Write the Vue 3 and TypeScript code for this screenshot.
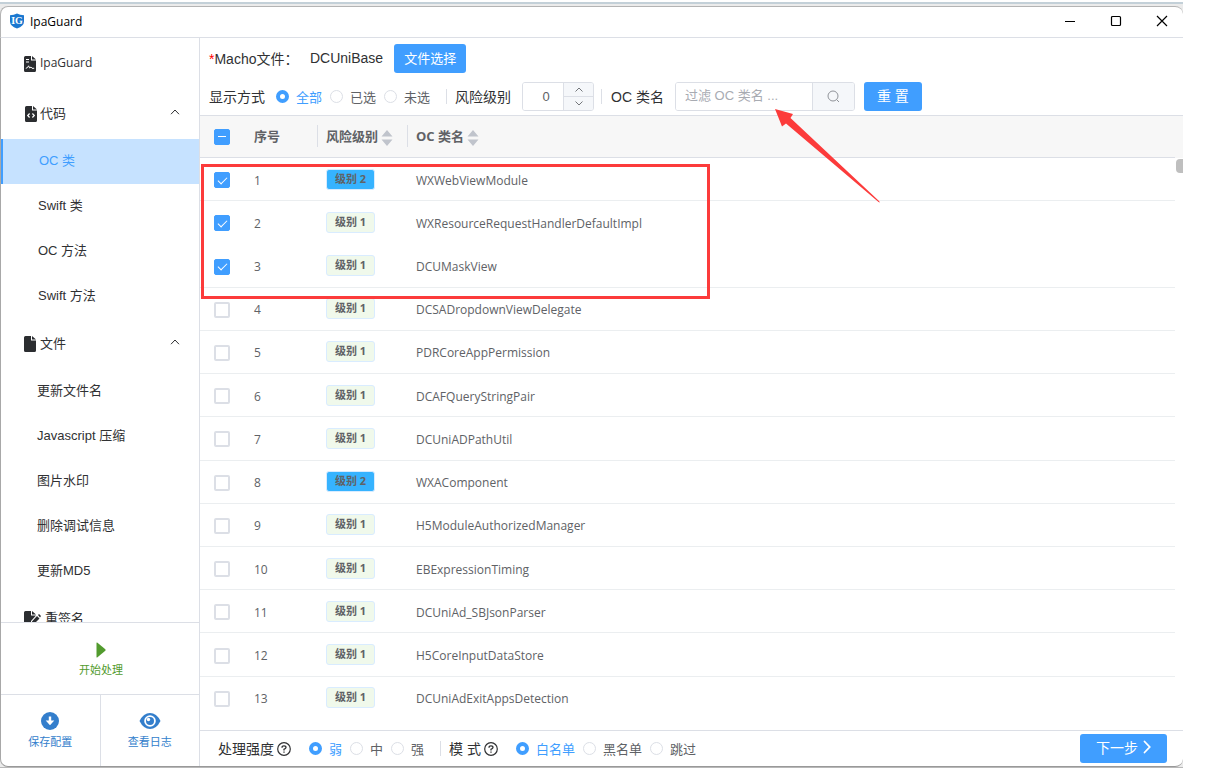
<script setup lang="ts">
import { ref } from 'vue'

interface Row {
  id: number
  level: number
  name: string
  checked: boolean
  joined?: boolean
}

interface Item {
  label: string
  active?: boolean
}

const rows = ref<Row[]>([
  { id: 1, level: 2, name: 'WXWebViewModule', checked: true },
  { id: 2, level: 1, name: 'WXResourceRequestHandlerDefaultImpl', checked: true, joined: true },
  { id: 3, level: 1, name: 'DCUMaskView', checked: true },
  { id: 4, level: 1, name: 'DCSADropdownViewDelegate', checked: false },
  { id: 5, level: 1, name: 'PDRCoreAppPermission', checked: false },
  { id: 6, level: 1, name: 'DCAFQueryStringPair', checked: false },
  { id: 7, level: 1, name: 'DCUniADPathUtil', checked: false },
  { id: 8, level: 2, name: 'WXAComponent', checked: false },
  { id: 9, level: 1, name: 'H5ModuleAuthorizedManager', checked: false },
  { id: 10, level: 1, name: 'EBExpressionTiming', checked: false },
  { id: 11, level: 1, name: 'DCUniAd_SBJsonParser', checked: false },
  { id: 12, level: 1, name: 'H5CoreInputDataStore', checked: false },
  { id: 13, level: 1, name: 'DCUniAdExitAppsDetection', checked: false, joined: true },
])

const codeItems: Item[] = [
  { label: 'OC 类', active: true },
  { label: 'Swift 类' },
  { label: 'OC 方法' },
  { label: 'Swift 方法' },
]
const fileItems: Item[] = [
  { label: '更新文件名' },
  { label: 'Javascript 压缩' },
  { label: '图片水印' },
  { label: '删除调试信息' },
  { label: '更新MD5' },
]

const display = ref('全部')
const strength = ref('弱')
const mode = ref('白名单')
const level = ref('0')
const keyword = ref('')
</script>

<template>
  <div class="desktop">
    <div class="window">
      <header class="titlebar">
        <svg class="logo" width="16" height="16" viewBox="0 0 16 16">
          <path d="M1 2.2Q5 2.2 8 .6Q11 2.2 15 2.2V8.500Q15 13 8 15.600Q1 13 1 8.500Z" fill="#1b78d0" />
          <text x="8" y="11" text-anchor="middle" class="logo-text">IG</text>
        </svg>
        <span class="title">IpaGuard</span>
        <div class="window-buttons">
          <button type="button" aria-label="最小化">
            <svg width="12" height="12" viewBox="0 0 12 12"><path d="M1 6.500H11" stroke="#000" fill="none" /></svg>
          </button>
          <button type="button" aria-label="最大化">
            <svg width="12" height="12" viewBox="0 0 12 12"><rect x="1.500" y="1.500" width="9" height="9" rx="1" stroke="#000" stroke-width="1.200" fill="none" /></svg>
          </button>
          <button type="button" aria-label="关闭">
            <svg width="12" height="12" viewBox="0 0 12 12"><path d="M1 1L11 11M11 1L1 11" stroke="#000" stroke-width="1.200" fill="none" /></svg>
          </button>
        </div>
      </header>

      <div class="content">
        <aside class="sidebar">
          <nav class="menu">
            <a href="#home" class="group">
              <svg width="12" height="16" viewBox="0 0 12 16">
                <path d="M1.500 0H7V4.500H12V14.500Q12 16 10.500 16H1.500Q0 16 0 14.500V1.500Q0 0 1.500 0ZM8 0L12 3.600H8Z" fill="#2b2d30" />
                <path d="M2 3.500H5M2 6H5M1.800 12.300Q3.500 12.300 4.600 9.800L5.600 12L7 11L8 12.300H10.200" stroke="#fff" fill="none" />
              </svg>
              <span class="latin">IpaGuard</span>
            </a>
            <button type="button" class="group indented">
              <svg width="12" height="16" viewBox="0 0 12 16">
                <path d="M1.500 0H7V4.500H12V14.500Q12 16 10.500 16H1.500Q0 16 0 14.500V1.500Q0 0 1.500 0ZM8 0L12 3.600H8Z" fill="#2b2d30" />
                <path d="M4.600 7.500L2.700 9.500L4.600 11.500M7.400 7.500L9.300 9.500L7.400 11.500" stroke="#fff" stroke-width="1.200" fill="none" />
              </svg>
              <span>代码</span>
              <svg class="caret" width="10" height="6" viewBox="0 0 10 6"><path d="M1 5.200L5 1L9 5.200" stroke="#303133" fill="none" /></svg>
            </button>
            <a v-for="item in codeItems" :key="item.label" href="#code" class="sub code" :class="{ active: item.active }">{{ item.label }}</a>
            <button type="button" class="group">
              <svg width="12" height="16" viewBox="0 0 12 16">
                <path d="M1.500 0H7V4.500H12V14.500Q12 16 10.500 16H1.500Q0 16 0 14.500V1.500Q0 0 1.500 0ZM8 0L12 3.600H8Z" fill="#2b2d30" />
              </svg>
              <span>文件</span>
              <svg class="caret" width="10" height="6" viewBox="0 0 10 6"><path d="M1 5.200L5 1L9 5.200" stroke="#303133" fill="none" /></svg>
            </button>
            <a v-for="item in fileItems" :key="item.label" href="#file" class="sub">{{ item.label }}</a>
            <button type="button" class="group">
              <svg width="17" height="16" viewBox="0 0 17 16">
                <path d="M1.500 0H7V4.500H12L7 10V16H1.500Q0 16 0 14.500V1.500Q0 0 1.500 0ZM8 0L12 3.600H8Z" fill="#2b2d30" />
                <path d="M13 5L15.500 7.500L10 13L7.500 13.500L8 10.500ZM14 4L15 3L17 5L16 6.500Z" fill="#2b2d30" />
              </svg>
              <span>重签名</span>
            </button>
          </nav>
          <button type="button" class="action start">
            <svg width="10" height="16" viewBox="0 0 10 16"><path d="M.5 1Q.5 0 1.500 .8L9.300 7.200Q10 8 9.300 8.800L1.500 15.200Q.5 16 .5 15Z" fill="#529b2e" /></svg>
            <span>开始处理</span>
          </button>
          <div class="pair">
            <button type="button" class="action">
              <svg width="18" height="18" viewBox="0 0 18 18">
                <circle cx="9" cy="9" r="9" fill="#337ecc" />
                <path d="M7.800 4.500H10.200V8.500H13.300L9 13.200L4.700 8.500H7.800Z" fill="#fff" />
              </svg>
              <span>保存配置</span>
            </button>
            <button type="button" class="action">
              <svg width="22" height="18" viewBox="0 0 22 18">
                <path d="M.5 9Q4.500 1 11 1Q17.500 1 21.500 9Q17.500 17 11 17Q4.500 17 .5 9Z" fill="#337ecc" />
                <circle cx="11" cy="9" r="5.800" fill="#fff" />
                <circle cx="11" cy="9" r="4" fill="#337ecc" />
                <circle cx="9.500" cy="7.500" r="1.700" fill="#fff" />
              </svg>
              <span>查看日志</span>
            </button>
          </div>
        </aside>

        <main class="main">
          <section class="toolbar">
            <div class="line">
              <span class="label macho"><i>*</i>Macho文件：</span>
              <span class="label file">DCUniBase</span>
              <button type="button" class="primary pick">文件选择</button>
            </div>
            <div class="line">
              <span class="label">显示方式</span>
              <div class="radios first">
                <label v-for="o in ['全部', '已选', '未选']" :key="o"><input v-model="display" type="radio" name="display" :value="o" /><span>{{ o }}</span></label>
              </div>
              <span class="divider wide"></span>
              <label class="label" for="level">风险级别</label>
              <div class="number">
                <input id="level" v-model="level" type="text" />
                <div class="steps">
                  <button type="button" aria-label="增加"><svg width="8" height="5" viewBox="0 0 8 5"><path d="M.5 4.500L4 1L7.500 4.500" stroke="#73767a" fill="none" /></svg></button>
                  <button type="button" aria-label="减少"><svg width="8" height="5" viewBox="0 0 8 5"><path d="M.5 .5L4 4L7.500 .5" stroke="#73767a" fill="none" /></svg></button>
                </div>
              </div>
              <span class="divider"></span>
              <label class="label" for="keyword">OC 类名</label>
              <div class="search">
                <input id="keyword" v-model="keyword" type="text" placeholder="过滤 OC 类名 ..." />
                <button type="button" aria-label="搜索">
                  <svg width="13" height="13" viewBox="0 0 13 13"><circle cx="6" cy="6" r="5" stroke="#909399" fill="none" /><path d="M9.500 9.500L12 12" stroke="#909399" /></svg>
                </button>
              </div>
              <button type="button" class="primary reset">重 置</button>
            </div>
          </section>

          <section class="list">
            <table>
              <colgroup>
                <col class="c-check" /><col class="c-id" /><col class="c-level" /><col />
              </colgroup>
              <thead>
                <tr>
                  <th class="check"><input type="checkbox" class="partial" aria-label="全选" /></th>
                  <th class="idx">序号</th>
                  <th class="bar">
                    风险级别<svg class="sort" width="12" height="16" viewBox="0 0 12 16"><path d="M6 0L11.500 6.500H.5ZM6 16L.5 9.500H11.500Z" fill="#c0c4cc" /></svg>
                  </th>
                  <th class="bar">
                    OC 类名<svg class="sort" width="12" height="16" viewBox="0 0 12 16"><path d="M6 0L11.500 6.500H.5ZM6 16L.5 9.500H11.500Z" fill="#c0c4cc" /></svg>
                  </th>
                </tr>
              </thead>
              <tbody>
                <tr v-for="row in rows" :key="row.id" :class="{ joined: row.joined }">
                  <td class="check"><input v-model="row.checked" type="checkbox" :aria-label="row.name" /></td>
                  <td class="idx">{{ row.id }}</td>
                  <td class="lv"><span class="tag" :class="{ high: row.level === 2 }">级别 {{ row.level }}</span></td>
                  <td class="name">{{ row.name }}</td>
                </tr>
              </tbody>
            </table>
            <span class="thumb"></span>
          </section>

          <footer class="bottom">
            <span class="label">处理强度</span>
            <svg class="help" width="14" height="14" viewBox="0 0 14 14"><circle cx="7" cy="7" r="6.300" stroke="#303133" stroke-width="1.200" fill="none" /><path d="M5 5.700Q5 3.800 7 3.800Q9 3.800 9 5.500Q9 6.500 7 7.300V8.500M7 9.400V10.800" stroke="#303133" stroke-width="1.300" fill="none" /></svg>
            <div class="radios strength">
              <label v-for="o in ['弱', '中', '强']" :key="o"><input v-model="strength" type="radio" name="strength" :value="o" /><span>{{ o }}</span></label>
            </div>
            <span class="divider wide"></span>
            <span class="label">模 式</span>
            <svg class="help" width="14" height="14" viewBox="0 0 14 14"><circle cx="7" cy="7" r="6.300" stroke="#303133" stroke-width="1.200" fill="none" /><path d="M5 5.700Q5 3.800 7 3.800Q9 3.800 9 5.500Q9 6.500 7 7.300V8.500M7 9.400V10.800" stroke="#303133" stroke-width="1.300" fill="none" /></svg>
            <div class="radios mode">
              <label v-for="o in ['白名单', '黑名单', '跳过']" :key="o"><input v-model="mode" type="radio" name="mode" :value="o" /><span>{{ o }}</span></label>
            </div>
            <button type="button" class="primary next">
              下一步<svg width="8" height="14" viewBox="0 0 8 14"><path d="M1.500 1.500L6.700 7L1.500 12.500" stroke="#fff" stroke-width="1.800" stroke-linecap="round" fill="none" /></svg>
            </button>
          </footer>
        </main>
      </div>
    </div>

    <div class="mark"></div>
    <svg class="arrow" width="108" height="96" viewBox="0 0 108 96">
      <path d="M0 0L18 5L15.500 9L104 92L105 93.500L103.500 93L11 14.500L7 17.500Z" fill="#fc3b3b" />
    </svg>
  </div>
</template>

<style>
body {
  background: #fff;
}
</style>

<style scoped>
* {
  box-sizing: border-box;
}
.desktop {
  position: relative;
  height: 100vh;
  padding: 2px 43px 2px 0;
  font-family: 'Liberation Sans', 'Noto Sans CJK SC', sans-serif;
  font-size: 13px;
  color: #303133;
  overflow: hidden;
}
button,
input {
  font-family: inherit;
  font-size: 13px;
  color: inherit;
  margin: 0;
  padding: 0;
}
button {
  border: 0;
  background: none;
}
a {
  color: inherit;
  text-decoration: none;
}
svg {
  display: block;
  flex: none;
}
.window {
  display: flex;
  flex-direction: column;
  height: 100%;
  border-top: 2px solid #c3d0d8;
  border-bottom: 1px solid #b8b8b8;
  background: #ebebeb;
  padding-top: 2px;
}
.titlebar {
  display: flex;
  align-items: center;
  flex: none;
  height: 32px;
  padding: 0 9px 2px 8px;
  border: 1px solid #b4b4b4;
  border-right: 0;
  border-bottom-color: #dcdfe6;
  border-radius: 8px 8px 0 0;
  background: #fff;
  font-family: 'Open Sans', sans-serif;
  color: #000;
}
.logo-text {
  font: bold 10px 'Liberation Serif', serif;
  fill: #fff;
}
.title {
  margin-left: 5px;
  font-size: 12px;
}
.window-buttons {
  display: flex;
  gap: 22px;
  margin-left: auto;
}
.window-buttons button {
  display: flex;
  align-items: center;
  justify-content: center;
  width: 24px;
  height: 24px;
}
.content {
  display: flex;
  flex: 1;
  min-height: 0;
  border-left: 1px solid #a8a8a8;
  border-bottom: 1px solid #999;
  border-radius: 0 0 8px 8px;
  background: #fff;
  overflow: hidden;
}
.sidebar {
  display: flex;
  flex-direction: column;
  flex: none;
  width: 199px;
  border-right: 1px solid #dcdfe6;
}
.menu {
  flex: 1;
  min-height: 0;
  padding-top: 1px;
  overflow: hidden;
}
.group {
  display: flex;
  align-items: center;
  gap: 4px;
  width: 100%;
  height: 50px;
  padding: 0 19px 0 23px;
}
.group.indented {
  gap: 3px;
  padding-left: 24px;
}
.group span,
.caret {
  margin-bottom: 4px;
}
.latin {
  font-family: 'Open Sans', sans-serif;
  font-size: 12px;
}
.caret {
  margin-left: auto;
}
.sub {
  display: flex;
  align-items: center;
  height: 45px;
  padding: 0 0 5px 36px;
}
.sub.code {
  padding-left: 37px;
}
.sub.active {
  padding-left: 36px;
  border-left: 2px solid #409eff;
  background: #c6e2ff;
  color: #409eff;
}
.action {
  display: flex;
  flex-direction: column;
  align-items: center;
  justify-content: center;
  gap: 4px;
  flex: 1;
  padding-top: 1px;
  font-size: 11px;
  line-height: 16px;
  color: #337ecc;
}
.start {
  flex: none;
  height: 72px;
  padding: 2px 0 0 2px;
  border-top: 1px solid #dcdfe6;
  color: #529b2e;
}
.pair {
  display: flex;
  flex: none;
  height: 72px;
  border-top: 1px solid #dcdfe6;
}
.pair .action:first-child {
  border-right: 1px solid #dcdfe6;
}
.main {
  display: flex;
  flex-direction: column;
  flex: 1;
  min-width: 0;
}
.toolbar {
  flex: none;
  padding: 6px 9px 4px;
  border-bottom: 1px solid #dcdfe6;
}
.line {
  display: flex;
  align-items: center;
  height: 29px;
}
.line + .line {
  margin-top: 9px;
}
.label {
  padding-bottom: 2px;
  font-size: 14px;
  white-space: nowrap;
}
.label i {
  color: #f00;
  font-style: normal;
}
.macho {
  width: 101px;
}
.primary {
  display: flex;
  align-items: center;
  justify-content: center;
  height: 29px;
  padding-bottom: 3px;
  border-radius: 3px;
  background: #409eff;
  color: #fff;
}
.pick {
  width: 72px;
  margin-left: 11px;
}
.reset {
  width: 58px;
  margin-left: 9px;
  font-size: 14px;
}
.radios {
  display: flex;
  gap: 8px;
  color: #606266;
}
.radios label {
  display: flex;
  align-items: center;
  gap: 7px;
  white-space: nowrap;
}
.radios.first {
  margin-left: 11px;
}
.radios input {
  appearance: none;
  width: 13px;
  height: 13px;
  border: 1px solid #dcdfe6;
  border-radius: 50%;
  background: #fff;
}
.radios input:checked {
  border: 4px solid #409eff;
}
.radios input:checked + span {
  color: #409eff;
}
.divider {
  width: 1px;
  height: 15px;
  margin: 0 9px 0 7px;
  background: #dcdfe6;
}
.divider.wide {
  margin: 0 8px 0 16px;
}
.number,
.search {
  display: flex;
  height: 29px;
  border: 1px solid #dcdfe6;
  border-radius: 3px;
  margin-left: 11px;
  overflow: hidden;
}
.number {
  width: 72px;
}
.number input {
  flex: 1;
  min-width: 0;
  border: 0;
  padding-left: 6px;
  text-align: center;
  color: #606266;
}
.steps {
  display: flex;
  flex-direction: column;
  width: 30px;
  border-left: 1px solid #dcdfe6;
  background: #f5f7fa;
}
.steps button {
  display: flex;
  flex: 1;
  align-items: center;
  justify-content: center;
}
.steps button + button {
  border-top: 1px solid #dcdfe6;
}
.search {
  width: 180px;
}
.search input {
  flex: 1;
  min-width: 0;
  border: 0;
  padding: 0 0 3px 9px;
}
.search input::placeholder {
  color: #a8abb2;
}
.search button {
  display: flex;
  align-items: center;
  justify-content: center;
  width: 42px;
  border-left: 1px solid #dcdfe6;
  background: #f5f7fa;
}
.list {
  position: relative;
  flex: 1;
  min-height: 0;
  padding-right: 8px;
  overflow: hidden;
}
table {
  width: 100%;
  height: 604px;
  table-layout: fixed;
  border-collapse: separate;
  border-spacing: 0;
  font-family: 'Open Sans', 'Noto Sans CJK SC', sans-serif;
  font-size: 12px;
  color: #606266;
}
.c-check {
  width: 44px;
}
.c-id {
  width: 73px;
}
.c-level {
  width: 90px;
}
th,
td {
  padding: 0 9px;
  text-align: left;
}
thead tr {
  height: 42px;
}
th {
  padding-bottom: 2px;
  border-bottom: 1px solid #dcdfe6;
  background: #f7f7f7;
  font-size: 13px;
  white-space: nowrap;
}
th:last-child {
  box-shadow: 8px 0 0 #f7f7f7;
}
td {
  height: 43px;
  padding-top: 2px;
  border-bottom: 1px solid #ebeef0;
}
.joined td {
  border-bottom-color: transparent;
}
.idx {
  padding-left: 10px;
}
.check {
  padding-left: 14px;
  padding-right: 14px;
}
th.check {
  padding-bottom: 0;
}
.bar {
  background: linear-gradient(#dcdfe6, #dcdfe6) 0 9px / 1px 22px no-repeat #f7f7f7;
}
.sort {
  display: inline-block;
  margin-left: 3px;
  vertical-align: -5px;
}
.check input {
  appearance: none;
  display: flex;
  align-items: center;
  justify-content: center;
  width: 16px;
  height: 16px;
  border: 2px solid #dcdfe6;
  border-radius: 2px;
  background: #fff;
}
.check input:checked,
.check input.partial {
  border: 1px solid #409eff;
  background: #409eff;
}
.check input:checked::after {
  content: '';
  width: 8px;
  height: 4px;
  margin-bottom: 2px;
  border: solid #fff;
  border-width: 0 0 1px 1px;
  transform: rotate(-45deg);
}
.check input.partial::after {
  content: '';
  width: 8px;
  height: 1px;
  background: #fff;
}
.tag {
  display: inline-block;
  height: 21px;
  padding: 0 8px;
  border: 1px solid #d9ecff;
  border-radius: 3px;
  background: #f0f9eb;
  font-size: 11px;
  line-height: 18px;
  font-weight: bold;
  vertical-align: middle;
}
td.lv {
  padding-top: 0;
}
.tag.high {
  background: #36b3ff;
}
.thumb {
  position: absolute;
  top: 43px;
  right: 0;
  width: 7px;
  height: 14px;
  border-radius: 4px 0 0 4px;
  background: #bfbfbf;
}
.bottom {
  display: flex;
  align-items: center;
  flex: none;
  height: 36px;
  padding: 0 16px 0 18px;
  border-top: 1px solid #dcdfe6;
}
.bottom .radios {
  padding-bottom: 1px;
}
.help {
  margin-left: 3px;
}
.radios.strength,
.radios.mode {
  margin-left: 18px;
}
.next {
  gap: 5px;
  width: 87px;
  margin-left: auto;
  font-size: 14px;
}
.mark {
  position: absolute;
  left: 201px;
  top: 164px;
  width: 509px;
  height: 135px;
  border: 3px solid #fc3b3b;
  pointer-events: none;
}
.arrow {
  position: absolute;
  left: 775px;
  top: 109px;
  pointer-events: none;
}
</style>
